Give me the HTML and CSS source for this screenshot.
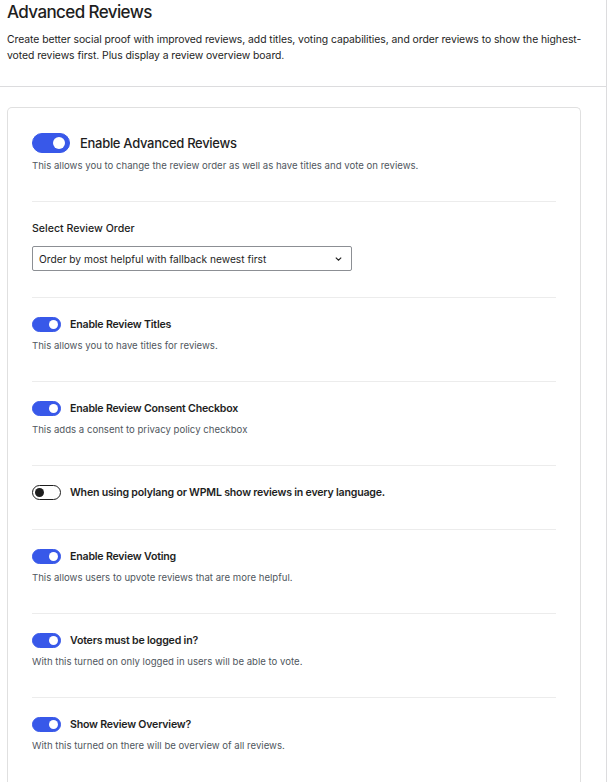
FILE: index.html
```html
<!DOCTYPE html>
<html lang="en">
<head>
<meta charset="utf-8">
<title>Advanced Reviews</title>
<link rel="stylesheet" href="styles.css">
</head>
<body>
<div class="page">
  <header class="intro">
    <h1 class="intro__title">Advanced Reviews</h1>
    <p class="intro__text">Create better social proof with improved reviews, add titles, voting capabilities, and order reviews to show the highest-voted reviews first. Plus display a review overview board.</p>
  </header>
  <main class="card">
    <section class="row row--main">
      <label class="toggle-line">
        <span class="toggle toggle--lg is-on"><span class="toggle__knob"></span></span>
        <span class="toggle-line__label toggle-line__label--lg">Enable Advanced Reviews</span>
      </label>
      <p class="row__desc">This allows you to change the review order as well as have titles and vote on reviews.</p>
    </section>
    <section class="row row--select">
      <div class="field-label">Select Review Order</div>
      <div class="select">
        <span class="select__value">Order by most helpful with fallback newest first</span>
        <svg class="select__chev" width="7" height="4" viewBox="0 0 7 4"><path d="M0.8 0.6l2.7 2.6 2.7-2.6" fill="none" stroke="#1e1e1e" stroke-width="1.1"/></svg>
      </div>
    </section>
    <section class="row">
      <label class="toggle-line">
        <span class="toggle is-on"><span class="toggle__knob"></span></span>
        <span class="toggle-line__label">Enable Review Titles</span>
      </label>
      <p class="row__desc">This allows you to have titles for reviews.</p>
    </section>
    <section class="row">
      <label class="toggle-line">
        <span class="toggle is-on"><span class="toggle__knob"></span></span>
        <span class="toggle-line__label">Enable Review Consent Checkbox</span>
      </label>
      <p class="row__desc">This adds a consent to privacy policy checkbox</p>
    </section>
    <section class="row row--bare">
      <label class="toggle-line">
        <span class="toggle is-off"><span class="toggle__knob"></span></span>
        <span class="toggle-line__label">When using polylang or WPML show reviews in every language.</span>
      </label>
    </section>
    <section class="row">
      <label class="toggle-line">
        <span class="toggle is-on"><span class="toggle__knob"></span></span>
        <span class="toggle-line__label">Enable Review Voting</span>
      </label>
      <p class="row__desc">This allows users to upvote reviews that are more helpful.</p>
    </section>
    <section class="row">
      <label class="toggle-line">
        <span class="toggle is-on"><span class="toggle__knob"></span></span>
        <span class="toggle-line__label">Voters must be logged in?</span>
      </label>
      <p class="row__desc">With this turned on only logged in users will be able to vote.</p>
    </section>
    <section class="row">
      <label class="toggle-line">
        <span class="toggle is-on"><span class="toggle__knob"></span></span>
        <span class="toggle-line__label">Show Review Overview?</span>
      </label>
      <p class="row__desc">With this turned on there will be overview of all reviews.</p>
    </section>
  </main>
</div>
</body>
</html>
```
FILE: styles.css
```css
* { box-sizing: border-box; }
html, body { margin: 0; padding: 0; background: #fff; }
body {
  font-family: Inter, "Noto Sans", sans-serif;
  color: #1e1e1e;
  -webkit-font-smoothing: antialiased;
}
.page {
  width: 607px;
  min-height: 782px;
  border-right: 1px solid #dcdcde;
}
.intro {
  padding: 0 7px 22px;
  border-bottom: 1px solid #dcdcde;
}
.intro__title {
  margin: 0;
  font-size: 17px;
  line-height: 24px;
  font-weight: 500;
  letter-spacing: -0.6px;
}
.intro__text {
  margin: 8px 0 0;
  max-width: 582px;
  font-size: 10.4px;
  line-height: 16px;
  letter-spacing: -0.06px;
  color: #1e1e1e;
}
.card {
  margin: 20px 25px 0 7px;
  border: 1px solid #e0e0e0;
  border-bottom: none;
  border-radius: 5px 5px 0 0;
  padding: 0 24px;
  min-height: 680px;
}
.row {
  border-bottom: 1px solid #ececec;
  padding: 19px 0 27px;
}
.row--main { padding-top: 25px; }
.row--select { padding-bottom: 26px; }
.row--bare { padding-bottom: 29px; }
.row:last-child { border-bottom: none; }
.toggle-line {
  display: flex;
  align-items: center;
  gap: 9px;
}
.toggle {
  position: relative;
  flex: none;
  width: 29px;
  height: 15px;
  border-radius: 8px;
  border: 1px solid #3858e9;
  background: #3858e9;
}
.toggle__knob {
  position: absolute;
  top: 2px;
  right: 2px;
  width: 9px;
  height: 9px;
  border-radius: 50%;
  background: #fff;
}
.toggle.is-off {
  background: #fff;
  border-color: #1e1e1e;
}
.toggle.is-off .toggle__knob {
  right: auto;
  left: 2px;
  background: #1e1e1e;
}
.toggle--lg {
  width: 38px;
  height: 20px;
  border-radius: 10px;
}
.toggle--lg .toggle__knob {
  top: 3px;
  right: 4px;
  width: 12px;
  height: 12px;
}
.toggle-line__label {
  font-size: 10.6px;
  font-weight: 600;
  line-height: 15px;
  letter-spacing: -0.2px;
  color: #1e1e1e;
}
.toggle-line__label--lg {
  font-size: 13px;
  font-weight: 500;
  line-height: 20px;
  letter-spacing: -0.3px;
  margin-left: 1px;
}
.row__desc {
  margin: 6px 0 0;
  font-size: 9.6px;
  line-height: 16px;
  color: #50575e;
}
.row--main .row__desc { margin-top: 5px; }
.field-label {
  font-size: 10.6px;
  font-weight: 500;
  line-height: 16px;
}
.select {
  margin-top: 9px;
  width: 320px;
  height: 25px;
  border: 1px solid #8c8f94;
  border-radius: 2px;
  display: flex;
  align-items: center;
  justify-content: space-between;
  padding: 0 9px 0 6px;
}
.select__value {
  font-size: 10.2px;
  color: #1e1e1e;
}
.select__chev { flex: none; }
```
